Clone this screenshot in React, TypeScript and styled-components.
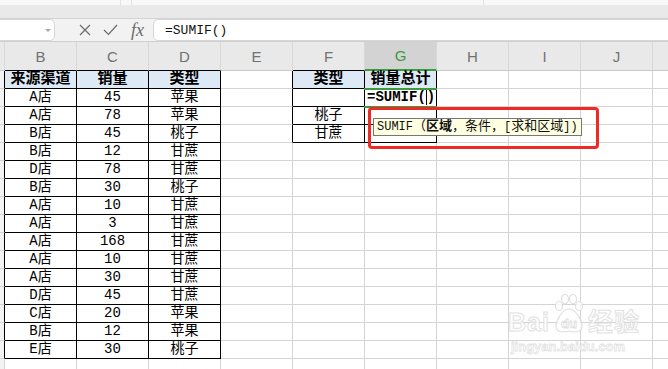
import React from "react";
import styled, { createGlobalStyle } from "styled-components";

const GRID = "#d4d4d4";
const INK = "#000";
const GREEN = "#3c9b3c";

const GlobalStyle = createGlobalStyle`
  html, body {
    margin: 0;
    padding: 0;
    background: #fff;
  }
  body {
    width: 668px;
    height: 369px;
    overflow: hidden;
    font-family: "Liberation Sans", "Noto Sans CJK SC", sans-serif;
  }
`;

const Window = styled.div`
  position: relative;
  width: 668px;
  height: 369px;
  overflow: hidden;
`;

const Ribbon = styled.div`
  display: flex;
  height: 5px;
  background: #f8f8f8;
`;

const RibbonPart = styled.div<{ w: number }>`
  width: ${({ w }) => w}px;
  border-right: 1px solid #e2e2e2;
`;

const Band = styled.div`
  height: 13px;
  background: #e9e9e9;
  border-bottom: 1px solid #d3d3d3;
`;

const FormulaBar = styled.div`
  display: flex;
  height: 22px;
  background: #f2f2f2;
  border-bottom: 1px solid #d0d0d0;
`;

const NameBox = styled.div`
  box-sizing: border-box;
  width: 65px;
  margin-left: -10px;
  background: #fff;
  border: 1px solid #d6d6d6;
  border-radius: 5px;
  display: flex;
  align-items: center;
  justify-content: flex-end;
  padding-right: 3px;
`;

const Caret = styled.span`
  width: 0;
  height: 0;
  border-left: 3px solid transparent;
  border-right: 3px solid transparent;
  border-top: 3px solid #a8a8a8;
`;

const Tools = styled.div`
  width: 98px;
  display: flex;
  align-items: center;
  padding-left: 24px;
  gap: 12px;
  box-sizing: border-box;
  color: #6b6b6b;
`;

const Fx = styled.span`
  font-family: "Liberation Serif", serif;
  font-style: italic;
  font-size: 18px;
  line-height: 20px;
  margin-left: 1px;
`;

const FormulaInput = styled.div`
  flex: 1;
  margin-right: -10px;
  background: #fff;
  border: 1px solid #d6d6d6;
  border-radius: 5px;
  display: flex;
  align-items: center;
  padding-left: 11px;
  font-family: "Liberation Mono", monospace;
  font-size: 13px;
  color: #111;
`;

const Sheet = styled.div`
  display: grid;
  grid-template-columns: 5px repeat(10, 72px);
  grid-template-rows: 29px repeat(17, 18px);
`;

const ColHead = styled.div<{ active?: boolean; bottom: string }>`
  box-sizing: border-box;
  background: ${({ active }) => (active ? "#d3d3d3" : "#e9e9e9")};
  border-right: 1px solid #d8d8d8;
  border-bottom: ${({ active }) => (active ? 2 : 1)}px solid
    ${({ bottom }) => bottom};
  display: flex;
  align-items: center;
  justify-content: center;
  font-family: "Liberation Sans", sans-serif;
  font-size: 15px;
  color: ${({ active }) => (active ? GREEN : "#727272")};
`;

const RowHead = styled.div<{ right: string }>`
  box-sizing: border-box;
  background: #f3f3f3;
  border-right: 1px solid ${({ right }) => right};
  border-bottom: 1px solid ${GRID};
`;

const Cell = styled.div<{
  right: string;
  bottom: string;
  head?: boolean;
  left?: boolean;
}>`
  box-sizing: border-box;
  border-right: 1px solid ${({ right }) => right};
  border-bottom: 1px solid ${({ bottom }) => bottom};
  background: ${({ head }) => (head ? "#dde9f5" : "#fff")};
  display: flex;
  align-items: center;
  justify-content: ${({ left }) => (left ? "flex-start" : "center")};
  padding-left: ${({ left }) => (left ? "2px" : "0")};
  font-family: "Liberation Mono", "Noto Sans CJK SC", monospace;
  font-size: ${({ head }) => (head ? 15 : 14)}px;
  font-weight: ${({ head }) => (head ? 700 : 400)};
  line-height: 17px;
  color: #000;
  white-space: nowrap;
  overflow: visible;
`;

const Typed = styled.span`
  font-family: "Liberation Mono", monospace;
  font-weight: 700;
  font-size: 14px;
  display: inline-flex;
  align-items: center;
`;

const Cursor = styled.i`
  display: inline-block;
  width: 1px;
  height: 15px;
  background: #000;
`;

const Selection = styled.div`
  position: absolute;
  left: 364px;
  top: 88px;
  width: 73px;
  height: 20px;
  box-sizing: border-box;
  border-top: 2px solid ${GREEN};
  border-bottom: 2px solid ${GREEN};
  pointer-events: none;
`;

const Mark = styled.div`
  position: absolute;
  left: 368px;
  top: 107px;
  width: 231px;
  height: 42px;
  box-sizing: border-box;
  border: 3px solid #ee2a24;
  border-radius: 4px;
`;

const Tip = styled.div`
  position: absolute;
  left: 373px;
  top: 118px;
  height: 18px;
  box-sizing: border-box;
  padding: 0 3px;
  background: #ffffe1;
  border: 1px solid #767676;
  display: flex;
  align-items: center;
  font-family: "Liberation Mono", "Noto Sans CJK SC", monospace;
  font-size: 13px;
  line-height: 16px;
  color: #111;
  white-space: nowrap;
`;

const TipLatin = styled.span`
  font-size: 12px;
`;

const Watermark = styled.div`
  position: absolute;
  left: 508px;
  top: 294px;
  display: flex;
  flex-direction: column;
  align-items: flex-start;
  pointer-events: none;
  opacity: 0.8;
`;

const LogoRow = styled.div`
  display: flex;
  align-items: flex-end;
  gap: 2px;
`;

const LogoWord = styled.span`
  font-family: "Liberation Sans", "Noto Sans CJK SC", sans-serif;
  font-weight: 700;
  font-size: 25px;
  line-height: 24px;
  color: #fff;
  -webkit-text-stroke: 1px #dadada;
  letter-spacing: 1px;
`;

const LogoUrl = styled.span`
  margin-left: 3px;
  margin-top: 5px;
  font-family: "Liberation Sans", sans-serif;
  font-weight: 700;
  font-size: 13px;
  color: #fff;
  -webkit-text-stroke: 0.8px #dcdcdc;
`;

const Paw = () => (
  <svg width="34" height="40" viewBox="0 0 34 40">
    <g fill="#fff" stroke="#d8d8d8" strokeWidth="1.2">
      <ellipse cx="7" cy="12" rx="3.5" ry="4.5" />
      <ellipse cx="13" cy="5" rx="3.5" ry="4.5" />
      <ellipse cx="21" cy="5" rx="3.5" ry="4.5" />
      <ellipse cx="27" cy="12" rx="3.5" ry="4.5" />
      <path d="M17 15 C10 15 4 27 4 32 C4 38 10 39 17 37 C24 39 30 38 30 32 C30 27 24 15 17 15 Z" />
    </g>
    <text
      x="17"
      y="34"
      textAnchor="middle"
      fontFamily="Liberation Sans, sans-serif"
      fontWeight="700"
      fontSize="13"
      fill="#fff"
      stroke="#d6d6d6"
      strokeWidth="0.8"
    >
      du
    </text>
  </svg>
);

const Cross = () => (
  <svg width="12" height="12" viewBox="0 0 12 12">
    <path d="M1 1 L11 11 M11 1 L1 11" stroke="#6b6b6b" strokeWidth="1.2" />
  </svg>
);

const Check = () => (
  <svg width="15" height="12" viewBox="0 0 15 12">
    <path
      d="M1 6 L5.5 10.5 L14 1"
      stroke="#6b6b6b"
      strokeWidth="1.2"
      fill="none"
    />
  </svg>
);

// column index: 0 = row header, 1 = B ... 9 = J, 10 = K (cut off)
const LETTERS = ["", "B", "C", "D", "E", "F", "G", "H", "I", "J", ""];

const sales: [string, string, string][] = [
  ["A店", "45", "苹果"],
  ["A店", "78", "苹果"],
  ["B店", "45", "桃子"],
  ["B店", "12", "甘蔗"],
  ["D店", "78", "甘蔗"],
  ["B店", "30", "桃子"],
  ["A店", "10", "甘蔗"],
  ["A店", "3", "甘蔗"],
  ["A店", "168", "甘蔗"],
  ["A店", "10", "甘蔗"],
  ["A店", "30", "甘蔗"],
  ["D店", "45", "甘蔗"],
  ["C店", "20", "苹果"],
  ["B店", "12", "苹果"],
  ["E店", "30", "桃子"],
];

const summary: React.ReactNode[][] = [
  ["类型", "销量总计"],
  [
    "",
    <Typed key="f">
      =SUMIF(
      <Cursor />)
    </Typed>,
  ],
  ["桃子", ""],
  ["甘蔗", ""],
];

const ROWS = 17;

const inTable = (r: number, c: number) =>
  (r >= 1 && r <= 16 && c >= 1 && c <= 3) ||
  (r >= 1 && r <= 4 && c >= 5 && c <= 6);

const cellText = (r: number, c: number): React.ReactNode => {
  if (c >= 1 && c <= 3 && r >= 1 && r <= 16) {
    if (r === 1) return ["来源渠道", "销量", "类型"][c - 1];
    return sales[r - 2][c - 1];
  }
  if (c >= 5 && c <= 6 && r >= 1 && r <= 4) return summary[r - 1][c - 5];
  return "";
};

const App = () => {
  const rows = Array.from({ length: ROWS }, (_, i) => i + 1);

  return (
    <Window>
      <GlobalStyle />
      <Ribbon>
        <RibbonPart w={120} />
        <RibbonPart w={10} />
        <RibbonPart w={351} />
      </Ribbon>
      <Band />
      <FormulaBar>
        <NameBox>
          <Caret />
        </NameBox>
        <Tools>
          <Cross />
          <Check />
          <Fx>fx</Fx>
        </Tools>
        <FormulaInput>=SUMIF()</FormulaInput>
      </FormulaBar>

      <Sheet>
        {LETTERS.map((l, c) => (
          <ColHead
            key={`h${c}`}
            active={l === "G"}
            bottom={l === "G" ? GREEN : inTable(1, c) ? INK : "#c9c9c9"}
          >
            {l}
          </ColHead>
        ))}
        {rows.map((r) =>
          LETTERS.map((_, c) =>
            c === 0 ? (
              <RowHead key={`${r}-0`} right={inTable(r, 1) ? INK : GRID} />
            ) : (
              <Cell
                key={`${r}-${c}`}
                right={inTable(r, c) || inTable(r, c + 1) ? INK : GRID}
                bottom={inTable(r, c) || inTable(r + 1, c) ? INK : GRID}
                head={r === 1 && inTable(r, c)}
                left={r === 2 && c === 6}
              >
                {cellText(r, c)}
              </Cell>
            )
          )
        )}
      </Sheet>

      <Selection />
      <Mark />
      <Tip>
        <TipLatin>SUMIF </TipLatin>（<b>区域</b>，条件，<TipLatin>[</TipLatin>
        求和区域<TipLatin>])</TipLatin>
      </Tip>

      <Watermark>
        <LogoRow>
          <LogoWord>Bai</LogoWord>
          <Paw />
          <LogoWord>经验</LogoWord>
        </LogoRow>
        <LogoUrl>jingyan.baidu.com</LogoUrl>
      </Watermark>
    </Window>
  );
};

export default App;
